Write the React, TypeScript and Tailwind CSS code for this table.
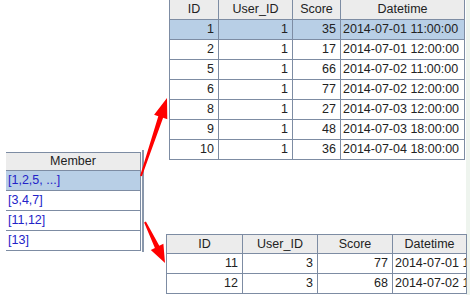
import React from 'react';

const font = { fontFamily: '"Liberation Sans", Arial, sans-serif' };

type Row = [string, string, string, string];

const topRows: Row[] = [
  ['1', '1', '35', '2014-07-01 11:00:00'],
  ['2', '1', '17', '2014-07-01 12:00:00'],
  ['5', '1', '66', '2014-07-02 11:00:00'],
  ['6', '1', '77', '2014-07-02 12:00:00'],
  ['8', '1', '27', '2014-07-03 12:00:00'],
  ['9', '1', '48', '2014-07-03 18:00:00'],
  ['10', '1', '36', '2014-07-04 18:00:00'],
];

const bottomRows: Row[] = [
  ['11', '3', '77', '2014-07-01 11:00:00'],
  ['12', '3', '68', '2014-07-02 12:00:00'],
];

const members = ['[1,2,5, ...]', '[3,4,7]', '[11,12]', '[13]'];

const headers = ['ID', 'User_ID', 'Score', 'Datetime'];

const DataTable = ({ rows, widths, headH, selected }: { rows: Row[]; widths: number[]; headH: string; selected?: number }) => (
  <div className="border-l border-t border-[#7d8ca3] text-[12.5px] text-[#222]">
    <div className={`flex ${headH} bg-[#ececec]`}>
      {headers.map((h, i) => (
        <div
          key={h}
          style={{ width: widths[i] }}
          className="shrink-0 border-r border-b border-[#7d8ca3] flex items-center justify-center"
        >
          {h}
        </div>
      ))}
    </div>
    {rows.map((r, ri) => (
      <div key={ri} className={`flex h-[20px] ${ri === selected ? 'bg-[#b8cfe6]' : 'bg-white'}`}>
        {r.map((c, i) => (
          <div
            key={i}
            style={{ width: widths[i] }}
            className={`shrink-0 border-r border-b border-[#7d8ca3] flex items-center whitespace-nowrap overflow-hidden ${
              i === 3 ? 'justify-start pl-[2px]' : 'justify-end pr-[4px]'
            }`}
          >
            {c}
          </div>
        ))}
      </div>
    ))}
  </div>
);

export default function App() {
  return (
    <div className="relative w-[470px] h-[295px] bg-white overflow-hidden" style={font}>
      {/* right edge strip */}
      <div className="absolute right-0 top-0 w-[4px] h-full bg-[#eef4ee]" />

      {/* top table */}
      <div className="absolute left-[169px] top-[-1px]">
        <DataTable rows={topRows} widths={[49, 74, 48, 124]} headH="h-[20px]" selected={0} />
      </div>

      {/* member table */}
      <div className="absolute left-[6px] top-[150px] flex">
        <div className="mt-[2px] w-[135px] border-t border-[#7d8ca3] text-[12.5px]">
          <div className="h-[18px] bg-[#ececec] border-r border-b border-[#7d8ca3] flex items-center justify-center text-[#222]">
            Member
          </div>
          {members.map((m, i) => (
            <div
              key={m}
              className={`h-[20px] border-r border-b border-[#7d8ca3] flex items-center pl-[2px] text-[#2323c8] ${
                i === 0 ? 'bg-[#b8cfe6]' : 'bg-white'
              }`}
            >
              {m}
            </div>
          ))}
        </div>
        <div className="w-[1px]" />
        <div className="w-[2px] h-[102px] bg-[#8a98ac]" />
      </div>

      {/* bottom table */}
      <div className="absolute left-[166px] top-[234px]">
        <DataTable rows={bottomRows} widths={[76, 75, 75, 74]} headH="h-[19px]" />
      </div>

      {/* arrows */}
      <svg className="absolute inset-0 pointer-events-none" width="470" height="295">
        <polygon
          fill="#ff0000"
          points="140.1,175.7 158.3,116.2 154.1,114.8 167,98 167.3,119.2 163.1,117.8 141.9,176.3"
        />
        <polygon
          fill="#ff0000"
          points="144.1,222.4 154.9,247.9 150.8,249.9 165,263 163.4,243.7 159.3,245.7 145.9,221.6"
        />
      </svg>
    </div>
  );
}
